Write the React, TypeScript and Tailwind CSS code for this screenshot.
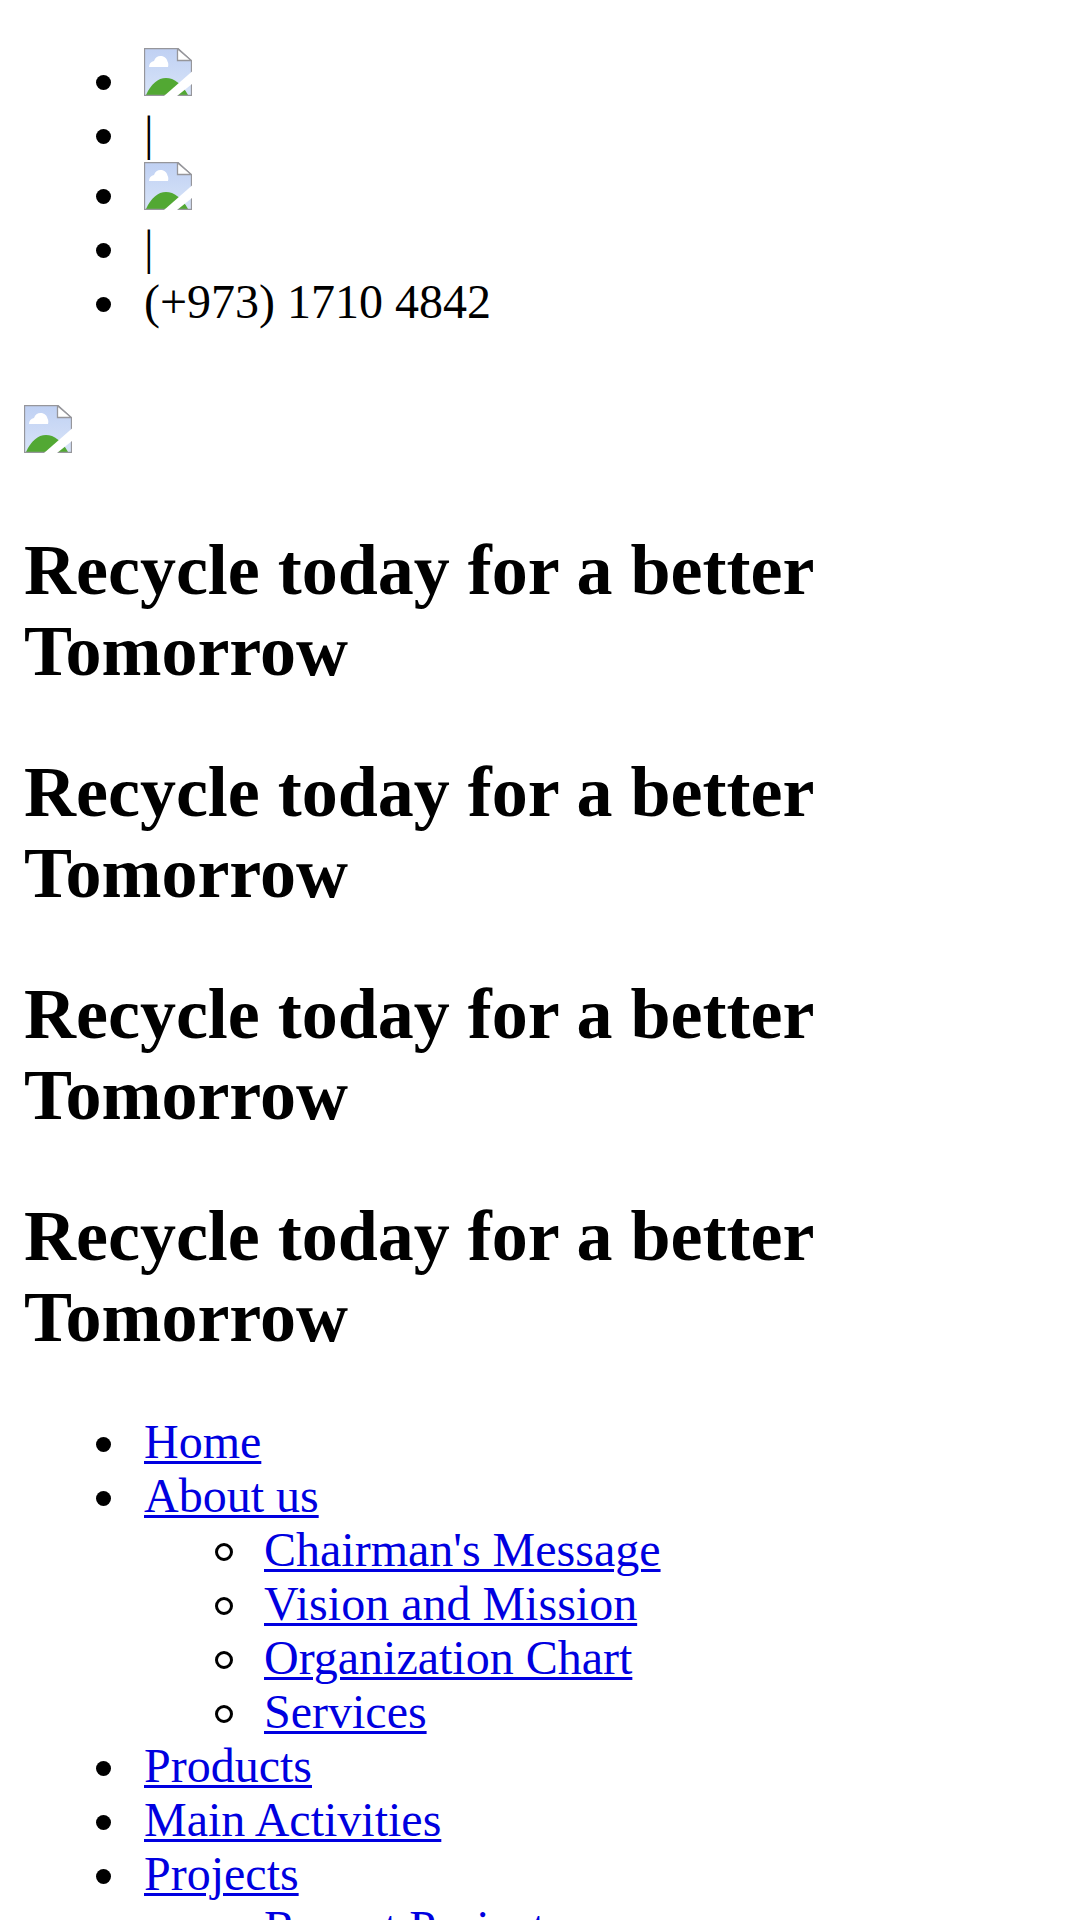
import type { ReactNode } from 'react'

function BrokenImage() {
  return (
    <svg viewBox="0 0 48 48" className="block h-12 w-12">
      <defs>
        <linearGradient id="sky" x1="0" y1="0" x2="0" y2="1">
          <stop offset="0" stopColor="#bfd0f3" />
          <stop offset="1" stopColor="#d8e4f8" />
        </linearGradient>
      </defs>
      {/* page with sky */}
      <path d="M0 0H34L48 13V48H0Z" fill="url(#sky)" />
      {/* cloud */}
      <path d="M5 19C5 16 7 13.500 10 13C11 9.500 13.500 8 16.500 8C20.500 8 23 10.500 23.500 13.500C24.500 15 24.500 17.500 24 19Z" fill="#fff" />
      {/* hill */}
      <path d="M2 47C7 36 14 30 22 30C30 30 38 36 44 47Z" fill="#52a833" />
      <path d="M0.500 0.500H34L47.500 13V47.500H0.500Z" fill="none" stroke="#96969b" strokeWidth="1.300" />
      {/* folded corner */}
      <path d="M33.500 0.700V12.500H47.300Z" fill="#fff" stroke="#96969b" strokeWidth="1.300" />
      {/* tear */}
      <path d="M48 23.500V36L33 48H20Z" fill="#fff" />
    </svg>
  )
}

interface BulletItemProps {
  circle?: boolean;
  image?: boolean;
  children: ReactNode;
}

function BulletItem({ circle, image, children }: BulletItemProps) {
  return (
    <li className={`flex items-start ${image ? 'h-[60px]' : ''}`}>
      <span className={`flex shrink-0 justify-end ${circle ? '-ml-[26px] w-[26px] pt-[19px]' : '-ml-6 w-6 pt-[21px]'} ${image ? 'pt-[27px]' : ''}`}>
        <span className={circle
          ? 'mr-[31px] h-[18px] w-[18px] shrink-0 rounded-full border-3 border-black'
          : 'mr-[33px] h-[15px] w-[15px] shrink-0 rounded-full bg-black'}
        />
      </span>
      <div>{children}</div>
    </li>
  )
}

function Line({ children }: { children: ReactNode }) {
  return <div className="h-[54px] leading-[52px]">{children}</div>
}

function NavLink({ label }: { label: string }) {
  return (
    <Line>
      <a href="#" className="text-[#0000e0] underline decoration-3 underline-offset-3">{label}</a>
    </Line>
  )
}

interface NavItem {
  label: string;
  children?: string[];
}

const slides = [1, 2, 3, 4]

const navItems: NavItem[] = [
  { label: 'Home' },
  {
    label: 'About us',
    children: ["Chairman's Message", 'Vision and Mission', 'Organization Chart', 'Services'],
  },
  { label: 'Products' },
  { label: 'Main Activities' },
  { label: 'Projects', children: ['Recent Projects'] },
]

export default function App() {
  return (
    <div className="h-[1920px] overflow-hidden bg-white px-6 pt-12 font-['Liberation_Serif',serif] text-[48px] leading-[54px] text-black">
      <ul className="pl-[120px]">
        <BulletItem image><BrokenImage /></BulletItem>
        <BulletItem><Line>|</Line></BulletItem>
        <BulletItem image><BrokenImage /></BulletItem>
        <BulletItem><Line>|</Line></BulletItem>
        <BulletItem><Line>(+973) 1710 4842</Line></BulletItem>
      </ul>

      <div className="mt-[75px] h-[65px]">
        <BrokenImage />
      </div>

      <div className="mt-[60px] mb-[58px] flex flex-col gap-[60px]">
        {slides.map((slide) => (
          <h2 key={slide} className="w-[860px] text-[72px] leading-[81px] font-bold">
            Recycle today for a better Tomorrow
          </h2>
        ))}
      </div>

      <ul className="pl-[120px]">
        {navItems.map((item) => (
          <BulletItem key={item.label}>
            <NavLink label={item.label} />
            {item.children && (
              <ul className="pl-[120px]">
                {item.children.map((child) => (
                  <BulletItem key={child} circle>
                    <NavLink label={child} />
                  </BulletItem>
                ))}
              </ul>
            )}
          </BulletItem>
        ))}
      </ul>
    </div>
  )
}
